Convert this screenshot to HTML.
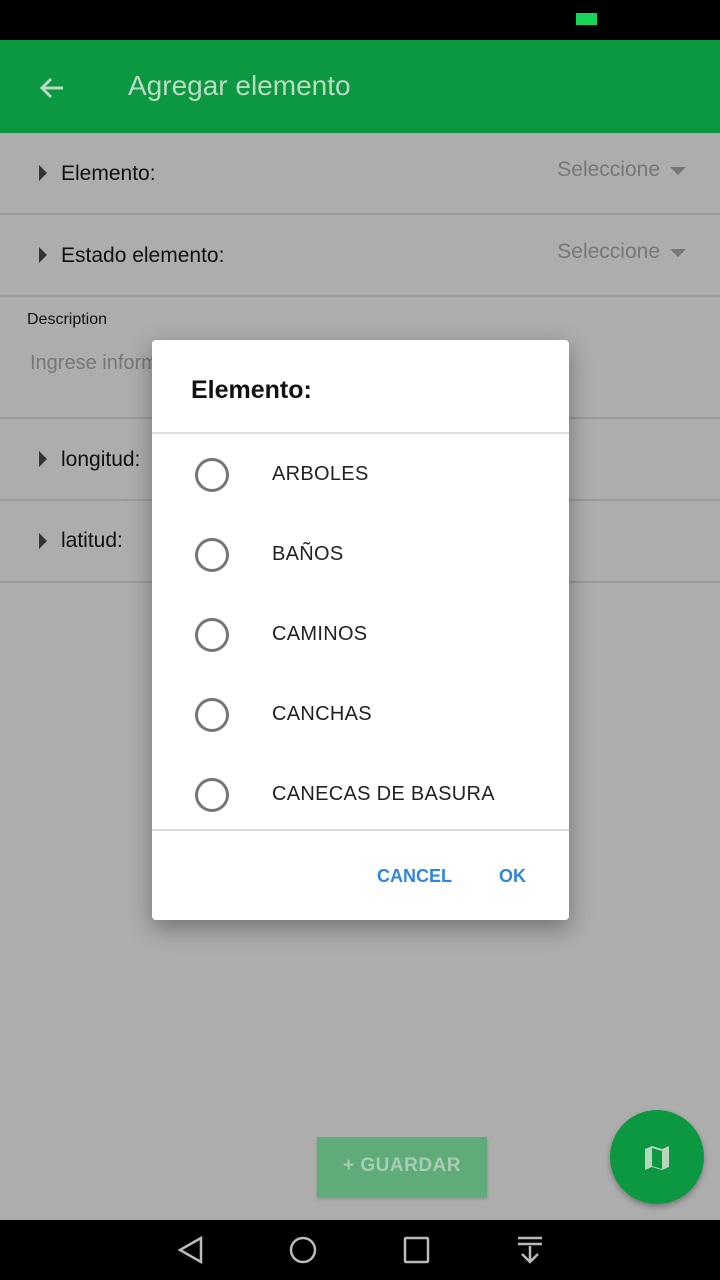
<!DOCTYPE html>
<html><head><meta charset="utf-8"><style>
*{margin:0;padding:0;box-sizing:border-box}
body{width:720px;height:1280px;overflow:hidden;background:#adadad;font-family:"Liberation Sans",sans-serif;position:relative}
.abs{position:absolute}
.row{position:absolute;left:0;width:720px;border-bottom:2px solid #9a9a9a}
.lbl{position:absolute;left:61px;font-size:21px;color:#111}
.tri{position:absolute;left:39px;width:0;height:0;border-top:8px solid transparent;border-bottom:8px solid transparent;border-left:8px solid #333}
.sel{position:absolute;right:60px;font-size:21px;color:#777}
.dd{position:absolute;right:34px;width:0;height:0;border-left:8px solid transparent;border-right:8px solid transparent;border-top:8px solid #777}
.opt{position:absolute;left:0;width:417px;height:80px}
.opt .r{position:absolute;left:43px;top:24px;width:34px;height:34px;border:3px solid #757575;border-radius:50%}
.opt span{position:absolute;left:120px;top:29px;font-size:20px;color:#222;letter-spacing:.3px}
</style></head><body>
<div class="abs" style="left:0;top:0;width:720px;height:40px;background:#000"></div>
<div class="abs" style="left:576px;top:13px;width:21px;height:12px;background:#18d35a"></div>
<div class="abs" style="left:0;top:40px;width:720px;height:93px;background:#0c9840"></div>
<svg class="abs" style="left:38px;top:74px" width="28" height="28" viewBox="0 0 28 28"><path d="M25 14H4M13 5L4 14l9 9" stroke="#b8d8c0" stroke-width="3" fill="none"/></svg>
<div class="abs" style="left:128px;top:70px;font-size:28px;color:#bcd9c3">Agregar elemento</div>
<div class="row" style="top:133px;height:82px"><div class="tri" style="top:32px"></div><div class="lbl" style="top:29px">Elemento:</div><div class="sel" style="top:25px">Seleccione</div><div class="dd" style="top:34px"></div></div>
<div class="row" style="top:215px;height:82px"><div class="tri" style="top:32px"></div><div class="lbl" style="top:29px">Estado elemento:</div><div class="sel" style="top:25px">Seleccione</div><div class="dd" style="top:34px"></div></div>
<div class="row" style="top:297px;height:122px"><div class="abs" style="left:27px;top:14px;font-size:16px;color:#111">Description</div><div class="abs" style="left:30px;top:55px;font-size:20px;color:#777">Ingrese informacion</div></div>
<div class="row" style="top:419px;height:82px"><div class="tri" style="top:32px"></div><div class="lbl" style="top:29px">longitud:</div></div>
<div class="row" style="top:501px;height:82px"><div class="tri" style="top:32px"></div><div class="lbl" style="top:28px">latitud:</div></div>
<div class="abs" style="left:317px;top:1137px;width:170px;height:60px;background:#5fac7a;box-shadow:0 2px 3px rgba(0,0,0,.2)"><span style="position:absolute;left:26px;top:18px;font-size:19px;color:#a8cdb2;font-weight:bold;letter-spacing:.5px">+ GUARDAR</span></div>
<div class="abs" style="left:610px;top:1110px;width:94px;height:94px;border-radius:50%;background:#0c9840;box-shadow:0 3px 6px rgba(0,0,0,.3)"></div>
<svg class="abs" style="left:643px;top:1144px" width="28" height="28" viewBox="0 0 28 28"><path d="M2 5l7-3 10 3 7-3v21l-7 3-10-3-7 3z" fill="#b5d6bd"/><path d="M9 4l10 3v18l-10-3z" fill="#0c9840"/></svg>
<div class="abs" style="left:0;top:1220px;width:720px;height:60px;background:#000"></div>
<svg class="abs" style="left:0;top:1220px" width="720" height="60"><g stroke="#bbb" stroke-width="2.5" fill="none"><path d="M201 18L180 30l21 12z"/><circle cx="303" cy="30" r="12"/><rect x="405" y="18" width="23" height="24" rx="1"/><path d="M518 18h24M518 24h24M530 26v16M522 34l8 8 8-8"/></g></svg>
<div class="abs" style="left:152px;top:340px;width:417px;height:580px;background:#fff;border-radius:4px;box-shadow:0 8px 24px rgba(0,0,0,.35)">
<div class="abs" style="left:39px;top:36px;font-size:25px;color:#111;font-weight:bold">Elemento:</div>
<div class="abs" style="left:0;top:92px;width:417px;height:2px;background:#ddd"></div>
<div class="opt" style="top:94px"><div class="r"></div><span>ARBOLES</span></div>
<div class="opt" style="top:174px"><div class="r"></div><span>BAÑOS</span></div>
<div class="opt" style="top:254px"><div class="r"></div><span>CAMINOS</span></div>
<div class="opt" style="top:334px"><div class="r"></div><span>CANCHAS</span></div>
<div class="opt" style="top:414px"><div class="r"></div><span>CANECAS DE BASURA</span></div>
<div class="abs" style="left:0;top:489px;width:417px;height:2px;background:#ddd"></div>
<div class="abs" style="left:225px;top:526px;font-size:18px;color:#2f86e0;font-weight:bold">CANCEL</div>
<div class="abs" style="left:347px;top:526px;font-size:18px;color:#2f86e0;font-weight:bold">OK</div>
</div>
</body></html>
